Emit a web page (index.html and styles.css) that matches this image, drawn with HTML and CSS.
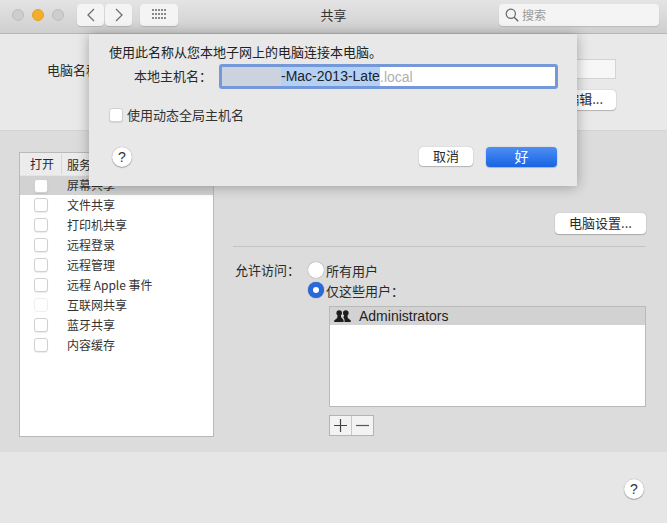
FILE: index.html
```html
<!DOCTYPE html>
<html lang="zh">
<head>
<meta charset="utf-8">
<title>共享</title>
<link rel="stylesheet" href="styles.css">
</head>
<body>
<div class="window">
  <header class="titlebar">
    <div class="lights">
      <span class="light"></span>
      <span class="light light-min"></span>
      <span class="light"></span>
    </div>
    <div class="navgroup">
      <button class="tool nav"><svg width="10" height="16" viewBox="0 0 10 16"><path d="M8 2 2 8l6 6" fill="none" stroke="#6f6f6f" stroke-width="1.3"/></svg></button>
      <button class="tool nav"><svg width="10" height="16" viewBox="0 0 10 16"><path d="m2 2 6 6-6 6" fill="none" stroke="#6f6f6f" stroke-width="1.3"/></svg></button>
    </div>
    <button class="tool grid-btn"><svg width="15" height="11" viewBox="0 0 15 11" fill="#8a8a8a"><rect x="0" y="0" width="2" height="2"/><rect x="3" y="0" width="2" height="2"/><rect x="6" y="0" width="2" height="2"/><rect x="9" y="0" width="2" height="2"/><rect x="12" y="0" width="2" height="2"/><rect x="0" y="4" width="2" height="2"/><rect x="3" y="4" width="2" height="2"/><rect x="6" y="4" width="2" height="2"/><rect x="9" y="4" width="2" height="2"/><rect x="12" y="4" width="2" height="2"/><rect x="0" y="8" width="2" height="2"/><rect x="3" y="8" width="2" height="2"/><rect x="6" y="8" width="2" height="2"/><rect x="9" y="8" width="2" height="2"/><rect x="12" y="8" width="2" height="2"/></svg></button>
    <div class="title">共享</div>
    <div class="search">
      <svg width="14" height="14" viewBox="0 0 14 14"><circle cx="5.8" cy="5.8" r="4.6" fill="none" stroke="#666" stroke-width="1.2"/><path d="m9.2 9.2 4 4" stroke="#666" stroke-width="1.4"/></svg>
      <span>搜索</span>
    </div>
  </header>

  <section class="top-panel">
    <div class="name-row">
      <span class="name-label">电脑名称：</span>
      <div class="name-input"></div>
    </div>
    <div class="edit-row"><button class="btn edit-btn">编辑...</button></div>
  </section>

  <section class="middle-panel">
    <div class="services">
      <div class="services-head">
        <span class="col-open">打开</span>
        <span class="col-service">服务</span>
      </div>
      <div class="service selected"><span class="check"></span><span class="service-name">屏幕共享</span></div>
      <div class="service"><span class="check"></span><span class="service-name">文件共享</span></div>
      <div class="service"><span class="check"></span><span class="service-name">打印机共享</span></div>
      <div class="service"><span class="check"></span><span class="service-name">远程登录</span></div>
      <div class="service"><span class="check"></span><span class="service-name">远程管理</span></div>
      <div class="service"><span class="check"></span><span class="service-name">远程 Apple 事件</span></div>
      <div class="service"><span class="check check-dim"></span><span class="service-name">互联网共享</span></div>
      <div class="service"><span class="check"></span><span class="service-name">蓝牙共享</span></div>
      <div class="service"><span class="check"></span><span class="service-name">内容缓存</span></div>
    </div>
    <div class="detail">
      <div class="settings-row"><button class="btn settings-btn">电脑设置...</button></div>
      <div class="divider"></div>
      <div class="access">
        <span class="access-label">允许访问：</span>
        <div class="radios">
          <div class="radio-row"><span class="radio"></span><span>所有用户</span></div>
          <div class="radio-row"><span class="radio radio-on"></span><span>仅这些用户：</span></div>
        </div>
      </div>
      <div class="users">
        <div class="user-row">
          <svg width="17" height="12" viewBox="0 0 17 12" fill="#1c1c1c"><circle cx="5.2" cy="3" r="2.8"/><circle cx="11.8" cy="3" r="2.8"/><path d="M3.6 5h3.2l.4 2.2L9.6 10v2H.2v-1.6L3.2 8zM10.2 5h3.2l.4 3 3 2.4V12h-6.3v-2.6L9.4 7.400z"/></svg>
          <span>Administrators</span>
        </div>
      </div>
      <div class="plusminus">
        <button class="pm"><svg width="13" height="13" viewBox="0 0 13 13"><path d="M6.500 0v13M0 6.500h13" stroke="#444" stroke-width="1.200"/></svg></button>
        <button class="pm"><svg width="13" height="13" viewBox="0 0 13 13"><path d="M0 6.500h13" stroke="#555" stroke-width="1.200"/></svg></button>
      </div>
    </div>
  </section>

  <footer class="bottom-panel"><button class="help">?</button></footer>

  <div class="sheet">
    <p class="sheet-text">使用此名称从您本地子网上的电脑连接本电脑。</p>
    <div class="host-row">
      <span class="host-label">本地主机名：</span>
      <div class="host-input"><span class="sel-blur"></span><span class="sel">-Mac-2013-Late</span><span class="suffix">.local</span></div>
    </div>
    <div class="dyn-row"><span class="check"></span><span>使用动态全局主机名</span></div>
    <div class="sheet-actions">
      <button class="help">?</button>
      <div class="sheet-buttons">
        <button class="btn cancel">取消</button>
        <button class="btn ok">好</button>
      </div>
    </div>
  </div>
</div>
</body>
</html>
```
FILE: styles.css
```css
* { box-sizing: border-box; }
html, body { margin: 0; padding: 0; }
body {
  width: 667px;
  height: 523px;
  overflow: hidden;
  font-family: "Noto Sans CJK SC", "Liberation Sans", sans-serif;
  font-size: 12px;
  color: #2a2a2a;
}
button { font-family: inherit; font-size: inherit; color: inherit; padding: 0; margin: 0; }
.window {
  position: relative;
  width: 667px;
  height: 523px;
  display: flex;
  flex-direction: column;
  background: #e6e6e6;
}
.titlebar {
  height: 34px;
  flex: none;
  display: flex;
  align-items: center;
  padding: 0 8px 4px 12px;
  background: linear-gradient(#e4e4e4, #cfcfcf);
  border-bottom: 1px solid #b5b5b5;
  position: relative;
}
.lights { display: flex; gap: 8px; margin-right: 13px; }
.light {
  width: 12px;
  height: 12px;
  border-radius: 50%;
  background: #cdcdcd;
  border: 1px solid #bdbdbd;
}
.light-min { background: #f3ae2c; border-color: #e8a020; }
.navgroup { display: flex; gap: 1px; margin-right: 8px; }
.tool {
  height: 22px;
  background: #f4f4f4;
  border: 0;
  border-radius: 4px;
  box-shadow: 0 1px 1px rgba(0,0,0,.15);
  display: flex;
  align-items: center;
  justify-content: center;
}
.nav { width: 27px; }
.grid-btn { width: 38px; }
.title {
  position: absolute;
  left: 0;
  right: 0;
  top: 6px;
  text-align: center;
  font-size: 13px;
  line-height: 17px;
  color: #333;
}
.search {
  margin-left: auto;
  width: 160px;
  height: 22px;
  background: #f4f4f4;
  border-radius: 4px;
  box-shadow: 0 1px 1px rgba(0,0,0,.12);
  display: flex;
  align-items: center;
  gap: 3px;
  padding-left: 6px;
  color: #9a9a9a;
  font-size: 12px;
  position: relative;
}
.top-panel {
  height: 96px;
  flex: none;
  background: #e9e9e9;
  padding: 25px 51px 0 47px;
}
.name-row { display: flex; align-items: center; justify-content: space-between; height: 20px; }
.name-label { font-size: 13px; }
.name-input { width: 220px; height: 20px; background: #f7f7f7; border: 1px solid #d4d4d4; }
.edit-row { display: flex; justify-content: flex-end; margin-top: 11px; }
.btn {
  background: #fff;
  border: 0;
  border-radius: 4px;
  box-shadow: 0 0 1px rgba(0,0,0,.35), 0 1px 1px rgba(0,0,0,.2);
  font-size: 13px;
  line-height: 18px;
  height: 20px;
  padding-bottom: 2px;
}
.edit-btn { width: 80px; text-align: right; padding-right: 13px; }
.middle-panel {
  height: 322px;
  flex: none;
  background: #dcdcdc;
  border-top: 1px solid #d4d4d4;
  display: flex;
  padding: 21px 21px 0 19px;
  gap: 19px;
}
.services {
  width: 195px;
  height: 285px;
  background: #fff;
  border: 1px solid #b9b9b9;
  flex: none;
}
.services-head {
  height: 22px;
  background: #ececec;
  display: flex;
  align-items: center;
  font-size: 12px;
}
.col-open { width: 42px; padding-left: 10px; border-right: 1px solid #d8d8d8; line-height: 20px; }
.col-service { padding-left: 5px; }
.service {
  height: 20px;
  display: flex;
  align-items: center;
  padding-left: 14px;
  gap: 19px;
  font-size: 12px;
  color: #333;
}
.service-name { padding-bottom: 2px; }
.selected { background: #d2d2d2; border-top: 1px solid #e4e4e4; }
.check {
  width: 14px;
  height: 14px;
  flex: none;
  background: #fff;
  border: 1px solid #d0d0d0;
  border-radius: 3px;
  box-shadow: 0 1px 1px rgba(0,0,0,.08);
}
.check-dim { border-color: #efefef; box-shadow: none; }
.detail { flex: 1; display: flex; flex-direction: column; padding-top: 61px; }
.settings-row { display: flex; justify-content: flex-end; }
.settings-btn { width: 91px; height: 21px; }
.divider { height: 1px; background: #c4c4c4; margin-top: 12px; }
.access { display: flex; margin-top: 13px; }
.access-label { width: 75px; padding-left: 2px; font-size: 13px; line-height: 20px; }
.radios { display: flex; flex-direction: column; }
.radio-row { display: flex; align-items: center; gap: 2px; height: 20px; font-size: 13px; }
.radio {
  width: 16px;
  height: 16px;
  border-radius: 50%;
  background: #fff;
  box-shadow: 0 0 1px rgba(0,0,0,.5);
  flex: none;
}
.radio-on { background: #2a68dd; display: flex; align-items: center; justify-content: center; }
.radio-on::after { content: ""; width: 6px; height: 6px; border-radius: 50%; background: #fff; }
.users {
  margin: 6px 0 0 96px;
  height: 101px;
  background: #fff;
  border: 1px solid #b9b9b9;
}
.user-row {
  height: 18px;
  background: #d2d2d2;
  display: flex;
  align-items: center;
  gap: 8px;
  padding-left: 4px;
  font-family: "Liberation Sans", sans-serif;
  font-size: 14px;
  color: #222;
}
.plusminus {
  margin: 8px 0 0 96px;
  width: 45px;
  height: 21px;
  display: flex;
  border: 1px solid #b4b4b4;
  background: #f3f3f3;
}
.pm {
  flex: 1;
  border: 0;
  background: transparent;
  display: flex;
  align-items: center;
  justify-content: center;
}
.pm + .pm { border-left: 1px solid #c8c8c8; }
.bottom-panel {
  flex: 1;
  background: #e6e6e6;
  display: flex;
  justify-content: flex-end;
  padding: 27px 23px 0 0;
}
.help {
  width: 20px;
  height: 20px;
  border: 0;
  border-radius: 50%;
  background: #fff;
  box-shadow: 0 0 1px rgba(0,0,0,.4), 0 1px 1px rgba(0,0,0,.25);
  font-family: "Liberation Sans", sans-serif;
  font-size: 14px;
  line-height: 20px;
  text-align: center;
  color: #333;
}
.sheet {
  position: absolute;
  left: 89px;
  top: 34px;
  width: 488px;
  height: 152px;
  background: #e8e8e8;
  box-shadow: 0 1px 12px rgba(0,0,0,.3);
  display: flex;
  flex-direction: column;
  padding: 8px 19px 0 20px;
}
.sheet-text { margin: 0; font-size: 13px; line-height: 19px; color: #222; }
.host-row { display: flex; align-items: center; margin-top: 3px; }
.host-label { width: 110px; padding-left: 25px; font-size: 13px; flex: none; padding-bottom: 2px; }
.host-input {
  width: 339px;
  height: 25px;
  background: #fff;
  border: 3px solid #7598d8;
  border-radius: 3px;
  display: flex;
  align-items: center;
  font-family: "Liberation Sans", sans-serif;
  font-size: 14px;
}
.sel-blur { width: 59px; height: 19px; background: #cdd3de; }
.sel { background: #b3d0f5; line-height: 19px; height: 19px; color: #222; width: 99px; white-space: nowrap; }
.suffix { color: #b0b0b0; }
.dyn-row { display: flex; align-items: center; gap: 4px; margin-top: 16px; font-size: 13px; color: #333; }
.sheet-actions {
  display: flex;
  align-items: center;
  justify-content: space-between;
  margin-top: 23px;
  padding-left: 3px;
}
.sheet-buttons { display: flex; gap: 13px; padding-right: 1px; }
.cancel { width: 54px; height: 19px; line-height: 17px; }
.ok { width: 71px; height: 20px; color: #fff; background: linear-gradient(#4d8ff5, #1a63e2); font-size: 14px; line-height: 18px; }
```
